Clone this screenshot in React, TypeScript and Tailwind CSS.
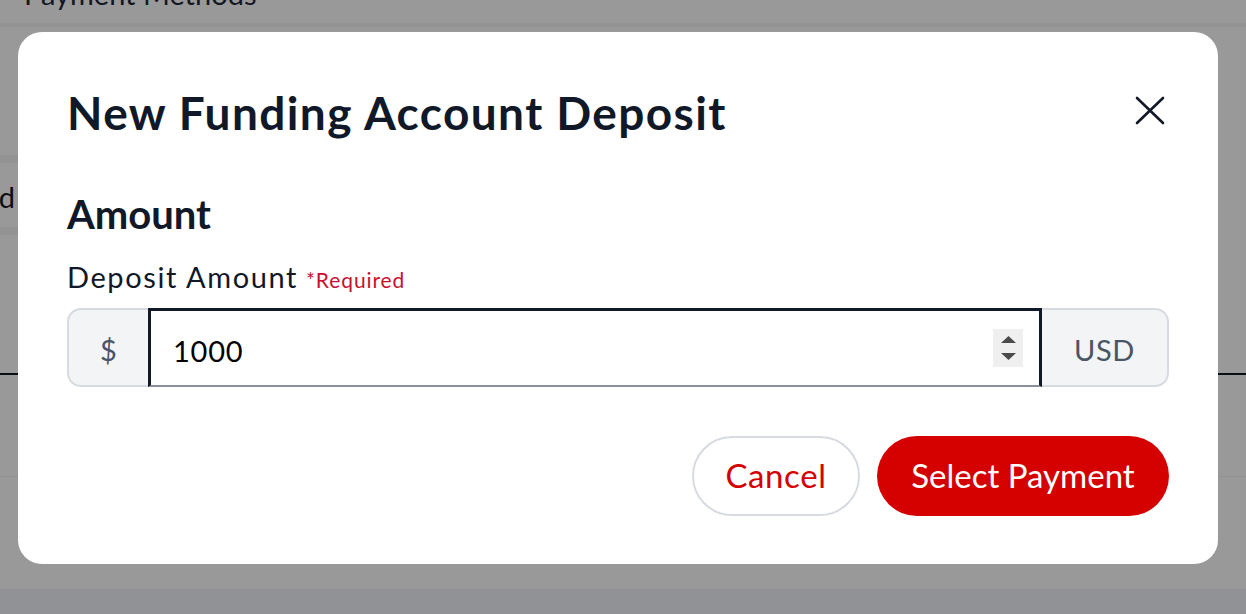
import React from 'react'

const font = { fontFamily: 'Lato, "Noto Sans", sans-serif' }

function CloseIcon() {
  return (
    <svg width="30" height="30" viewBox="0 0 30 30" fill="none">
      <path d="M2 2L28 27M28 2L2 27" stroke="#111827" strokeWidth="2.6" strokeLinecap="round" />
    </svg>
  )
}

function Spinner() {
  return (
    <div className="flex h-[38px] w-[30px] flex-col items-center justify-center gap-[10px] bg-[#efefef]">
      <svg width="15" height="7" viewBox="0 0 15 7">
        <path d="M7.5 0L15 7H0Z" fill="#4a4a4a" />
      </svg>
      <svg width="15" height="7" viewBox="0 0 15 7">
        <path d="M0 0H15L7.5 7Z" fill="#4a4a4a" />
      </svg>
    </div>
  )
}

// page that sits behind the dimmed overlay
function BackgroundPage() {
  return (
    <div className="flex h-[614px] w-full flex-col bg-white" style={font}>
      <div className="h-[27px] overflow-hidden border-b-4 border-[#f5f5f5]">
        <p className="-mt-[26px] pl-[24px] text-[29px] leading-[40px] text-[#1f2937]">Payment Methods</p>
      </div>
      <div className="h-[128px]" />
      <div className="flex h-[80px] w-[300px] flex-col">
        <div className="h-[8px] bg-[#f5f5f5]" />
        <div className="flex flex-1 items-center">
          <div className="flex w-[15px] justify-end overflow-hidden pt-[4px]">
            <span className="whitespace-nowrap text-[29px] text-[#111827]">Saved</span>
          </div>
        </div>
        <div className="h-[8px] bg-[#f5f5f5]" />
      </div>
      <div className="h-[138px]" />
      <div className="h-[2px] bg-[#111827]" />
      <div className="h-[101px]" />
      <div className="h-[1px] bg-[#f3f3f3]" />
      <div className="h-[112px]" />
      <div className="flex-1 border-t border-[#eef0f3] bg-[#f2f3f8]" />
    </div>
  )
}

export default function App() {
  return (
    <div className="relative h-[614px] w-[1246px] overflow-hidden">
      <BackgroundPage />

      <div className="absolute inset-0 bg-black/40 pl-[18px] pt-[32px]" style={font}>
        <div className="flex h-[532px] w-[1200px] flex-col rounded-[24px] bg-white pl-[49px] pr-[49px] pt-[53px]">
          <div className="flex items-start justify-between">
            <h2 className="text-[46px] font-bold leading-[1.2] tracking-[1.4px] text-[#111827]">
              New Funding Account Deposit
            </h2>
            <button className="mr-[4px] mt-[11px]">
              <CloseIcon />
            </button>
          </div>

          <h3 className="mt-[50px] text-[40px] font-bold leading-[1.2] text-[#111827]">Amount</h3>

          <div className="mt-[22px] flex items-baseline gap-[8px]">
            <span className="text-[29px] leading-[1.2] tracking-[1.6px] text-[#111827]">Deposit Amount</span>
            <span className="text-[21px] leading-[1.2] tracking-[0.9px] text-[#c8102e]">*Required</span>
          </div>

          <div className="mt-[13px] flex h-[79px] w-[1102px]">
            <div className="flex w-[81px] items-center justify-center rounded-l-[14px] border-2 border-r-0 border-[#d7dbe1] bg-[#f3f4f6] pt-[5px] text-[29px] text-[#4b5563]">
              $
            </div>
            <div className="flex flex-1 items-center border-[3px] border-b-2 border-[#111827] border-b-[#8c909b] pl-[22px] pr-[16px]">
              <span className="flex-1 pt-[5px] text-[29px] tracking-[0.8px] text-black">1000</span>
              <Spinner />
            </div>
            <div className="flex w-[127px] items-center justify-center rounded-r-[14px] border-2 border-l-0 border-[#d7dbe1] bg-[#f3f4f6] pt-[5px] text-[29px] tracking-[0.6px] text-[#4b5563]">
              USD
            </div>
          </div>

          <div className="mt-[49px] flex w-[1102px] justify-end gap-[17px]">
            <button className="h-[80px] w-[168px] rounded-full border-2 border-[#d7dbe1] bg-white text-[33px] tracking-[0.6px] text-[#d50000]">
              Cancel
            </button>
            <button className="h-[80px] w-[292px] rounded-full bg-[#d50000] text-[33px] text-white">
              Select Payment
            </button>
          </div>
        </div>
      </div>
    </div>
  )
}
